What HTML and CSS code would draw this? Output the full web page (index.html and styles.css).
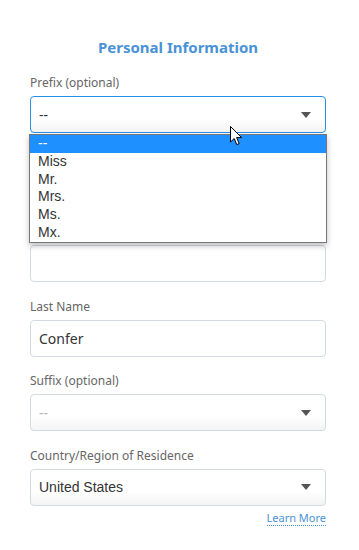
FILE: index.html
```html
<!DOCTYPE html>
<html lang="en">
<head>
    <meta charset="UTF-8">
    <meta name="viewport" content="width=device-width, initial-scale=1.0">
    <title>Personal Information</title>
    <link rel="stylesheet" href="styles.css">
</head>
<body>
    <div class="form">
        <h2 class="form-title">Personal Information</h2>

        <div class="field">
            <label class="field-label">Prefix (optional)</label>
            <div class="select focused">
                <span class="select-value">--</span>
                <span class="select-arrow"></span>
            </div>
            <ul class="options">
                <li class="option selected">--</li>
                <li class="option">Miss</li>
                <li class="option">Mr.</li>
                <li class="option">Mrs.</li>
                <li class="option">Ms.</li>
                <li class="option">Mx.</li>
            </ul>
            <svg class="pointer" width="13" height="20" viewBox="0 0 13 20">
                <path d="M0.5 0.5 L0.5 16 L4.2 12.5 L6.8 18.6 L9.2 17.6 L6.6 11.6 L11.6 11.6 Z" fill="#fff" stroke="#000" stroke-width="1" stroke-linejoin="round"/>
            </svg>
        </div>

        <!-- covered by the open prefix list -->
        <div class="field covered">
            <label class="field-label">First Name</label>
            <div class="input"></div>
        </div>

        <div class="field covered">
            <label class="field-label">Middle Name (optional)</label>
            <div class="input"></div>
        </div>

        <div class="field">
            <label class="field-label">Last Name</label>
            <div class="input"><span class="input-value">Confer</span></div>
        </div>

        <div class="field">
            <label class="field-label">Suffix (optional)</label>
            <div class="select">
                <span class="select-value placeholder">--</span>
                <span class="select-arrow"></span>
            </div>
        </div>

        <div class="field">
            <label class="field-label">Country/Region of Residence</label>
            <div class="select">
                <span class="select-value native">United States</span>
                <span class="select-arrow"></span>
            </div>
            <div class="field-help"><a href="#" class="learn-more">Learn More</a></div>
        </div>
    </div>
</body>
</html>
```

FILE: styles.css
```css
body {
    margin: 0;
    background: #fff;
    font-family: "Noto Sans", "Open Sans", sans-serif;
}
.form {
    padding: 38px 33px 0 30px;
}
.form-title {
    margin: 0 0 19px;
    text-align: center;
    font-size: 15px;
    line-height: 18px;
    font-weight: bold;
    color: #4a92d6;
}
.field {
    position: relative;
    margin-bottom: 16.5px;
}
.field.covered .field-label {
    visibility: hidden;
}
.field-label {
    display: block;
    font-size: 12px;
    line-height: 16px;
    color: #666;
    margin-bottom: 5px;
}
.input,
.select {
    box-sizing: border-box;
    height: 37px;
    border: 1px solid #d4d9e2;
    border-radius: 4px;
    background: #fff;
    display: flex;
    align-items: center;
    padding: 0 14px 0 8px;
}
.select {
    background: linear-gradient(to bottom, #fff 60%, #f4f4f4);
    justify-content: space-between;
}
.select.focused {
    border-color: #2592e6;
}
.input-value,
.select-value {
    font-size: 14px;
    color: #333;
}
.select-value.placeholder {
    color: #b5b5b5;
}
.select-value.native {
    font-family: "Liberation Sans", Arial, sans-serif;
}
.select-arrow {
    width: 0;
    height: 0;
    border-left: 5px solid transparent;
    border-right: 5px solid transparent;
    border-top: 6px solid #555;
}
.options {
    position: absolute;
    top: 59px;
    left: -1px;
    right: -1px;
    margin: 0;
    padding: 0;
    list-style: none;
    background: #fff;
    border: 1px solid #777;
    box-shadow: 0 3px 6px rgba(0, 0, 0, 0.25);
    z-index: 2;
}
.option {
    height: 17.8px;
    line-height: 17.8px;
    padding-left: 8px;
    font-family: "Liberation Sans", Arial, sans-serif;
    font-size: 14px;
    color: #333;
}
.option.selected {
    background: #1e90ff;
    color: #fff;
}
.pointer {
    position: absolute;
    left: 200px;
    top: 51px;
    z-index: 3;
}
.field-help {
    text-align: right;
    margin-top: 3px;
    line-height: 15px;
}
.learn-more {
    font-size: 11px;
    color: #4a92d6;
    text-decoration: none;
    border-bottom: 1px dotted #4a92d6;
}
```
